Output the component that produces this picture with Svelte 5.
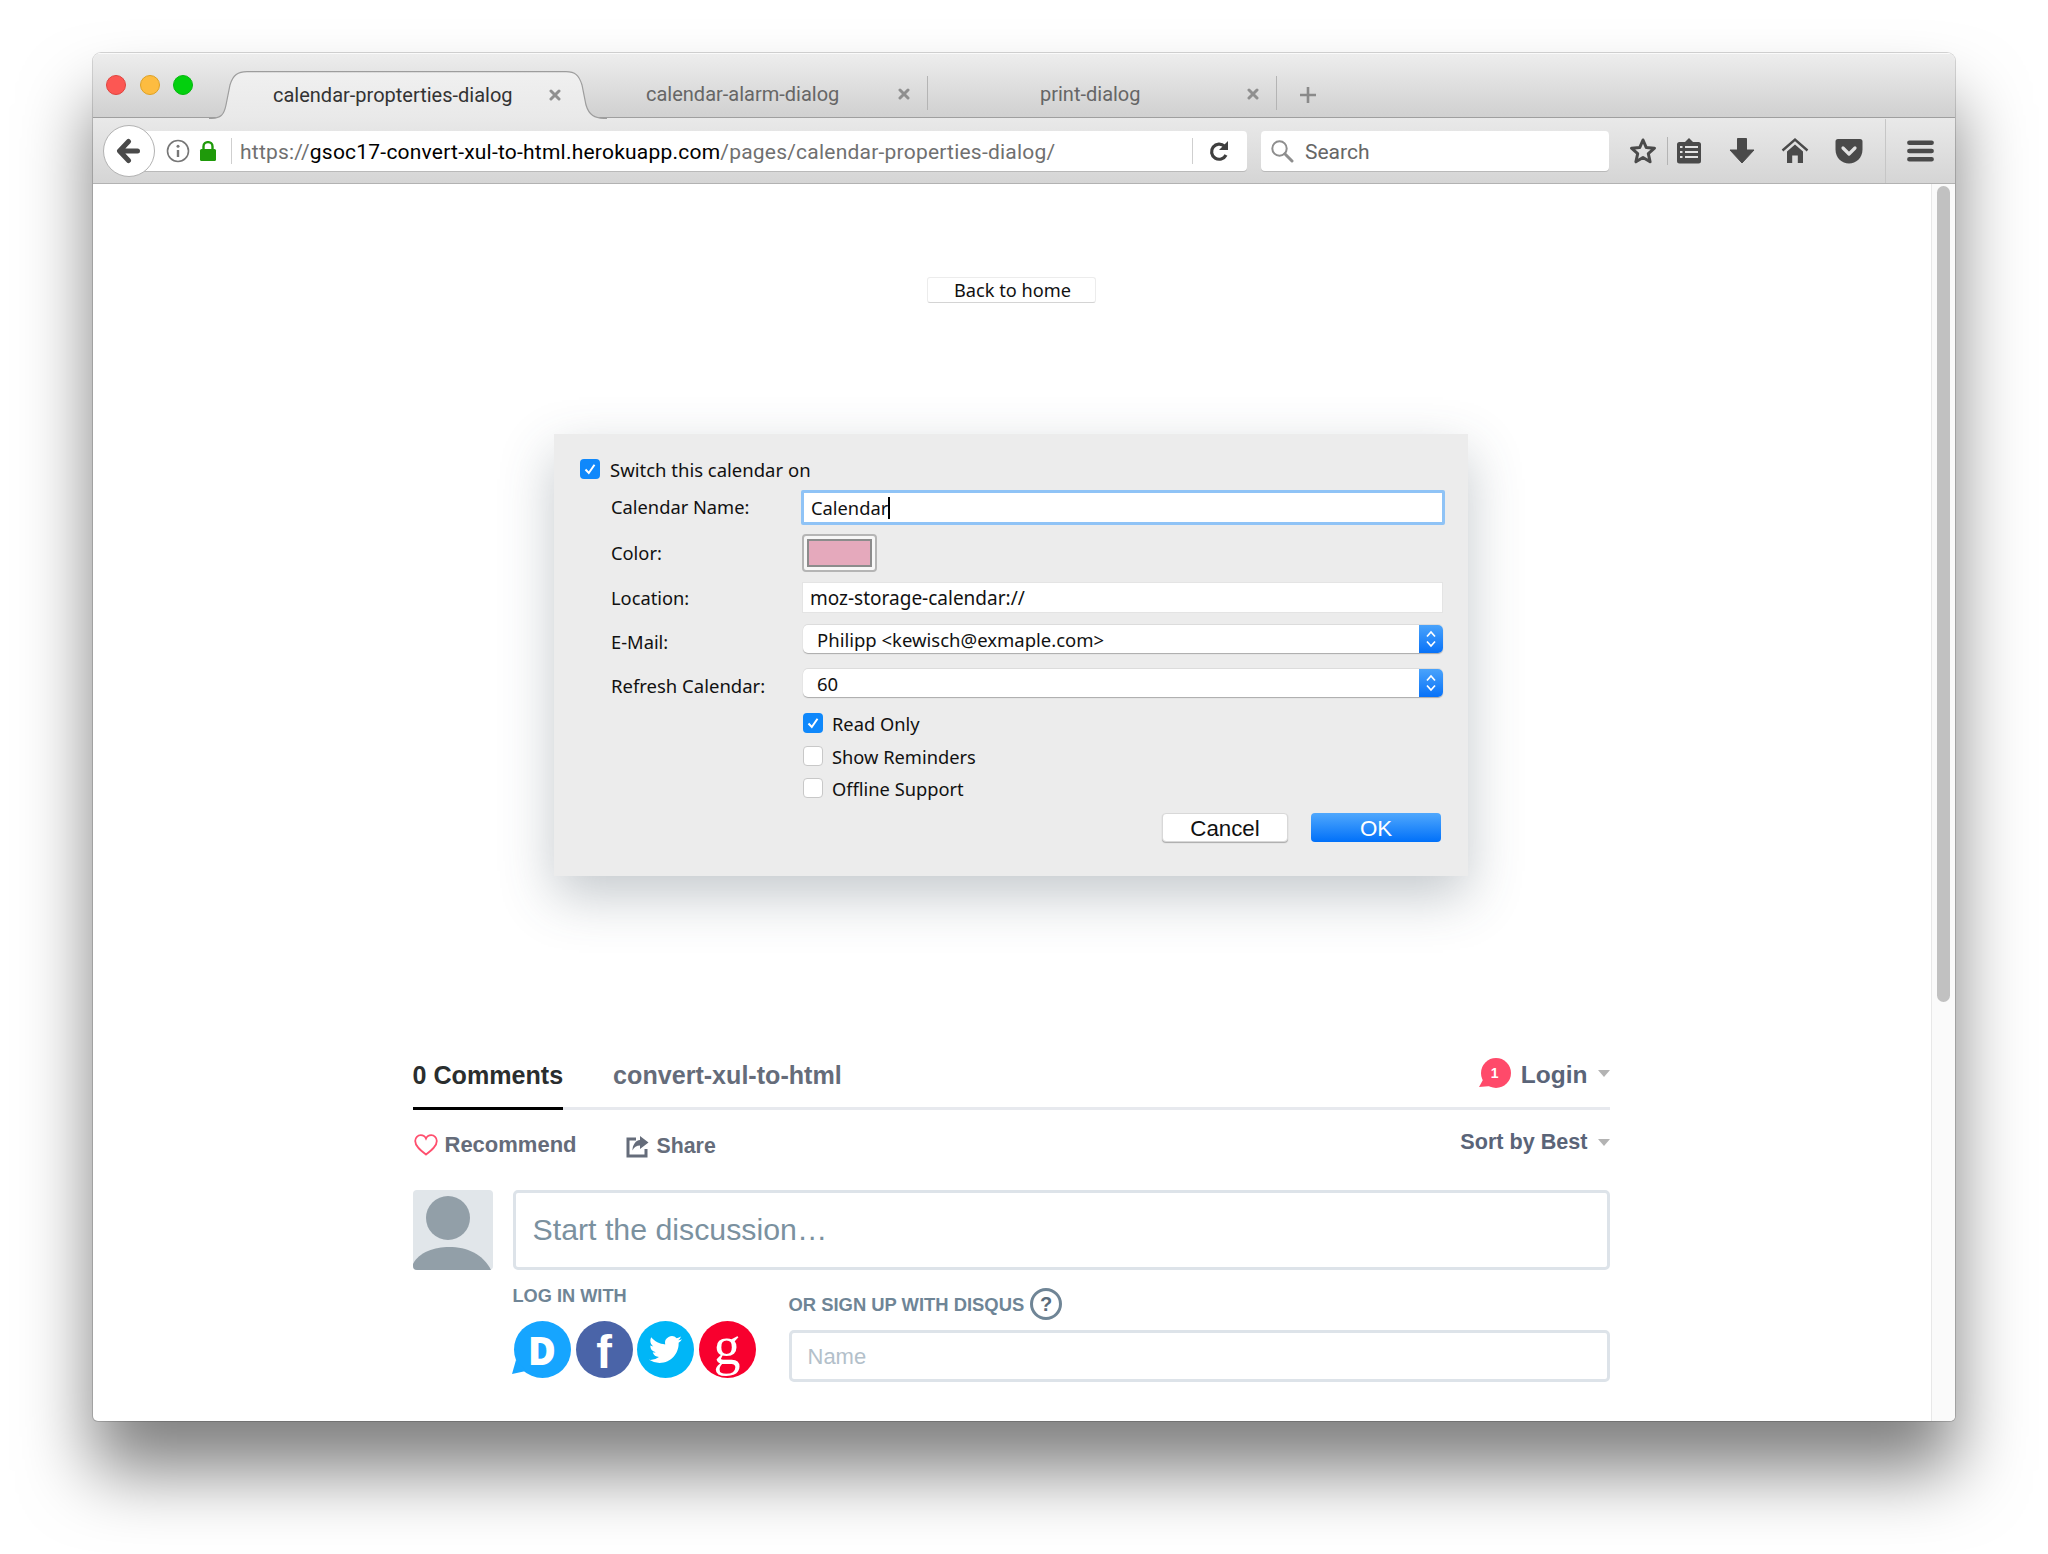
<script>
  const tabs = [
    { label: 'calendar-propterties-dialog', cls: 'active' },
    { label: 'calendar-alarm-dialog', cls: 'second' },
    { label: 'print-dialog', cls: 'third' }
  ];
  const options = [
    { label: 'Read Only', checked: true, cls: 'opt-first' },
    { label: 'Show Reminders', checked: false, cls: 'opt-second' },
    { label: 'Offline Support', checked: false, cls: 'opt-third' }
  ];
</script>

<div class="stage">
  <div class="window">
    <header class="tabstrip">
      <div class="lights">
        <span class="light red"></span>
        <span class="light yellow"></span>
        <span class="light green"></span>
      </div>
      {#each tabs as tab}
        <div class="tab {tab.cls}">
          {#if tab.cls === 'active'}
            <svg class="tabshape" viewBox="0 0 400 48" width="400" height="48" aria-hidden="true">
              <defs>
                <linearGradient id="tabfill" x1="0" y1="0" x2="0" y2="1">
                  <stop offset="0" stop-color="#f0f0f0" />
                  <stop offset="1" stop-color="#e9e9e9" />
                </linearGradient>
              </defs>
              <path d="M0 47.5 C12 47.5 15 44 17 34 L21 14 C24 4 29 .7 38 .7 L357 .7 C366 .7 370 4 373 14 L377 34 C380 44 385 47.5 398 47.5 Z" fill="url(#tabfill)" />
              <path d="M0 47.5 C12 47.5 15 44 17 34 L21 14 C24 4 29 .7 38 .7 L357 .7 C366 .7 370 4 373 14 L377 34 C380 44 385 47.5 398 47.5" fill="none" stroke="#9d9d9d" stroke-width="1.2" />
            </svg>
          {/if}
          <span class="tablabel">{tab.label}</span>
          <svg class="close" viewBox="0 0 12 12" width="12" height="12" aria-hidden="true">
            <path d="M2 2 L10 10 M10 2 L2 10" stroke="#8f8f8f" stroke-width="3" stroke-linecap="round" />
          </svg>
        </div>
      {/each}
      <svg class="newtab" viewBox="0 0 18 18" width="18" height="18" aria-hidden="true">
        <path d="M9 1 V17 M1 9 H17" stroke="#8a8a8a" stroke-width="2.6" />
      </svg>
    </header>

    <div class="toolbar">
      <div class="urlbar">
        <div class="back">
          <svg viewBox="0 0 24 26" width="24" height="26" aria-hidden="true">
            <path d="M21.5 13 H6 M12.5 3.5 L3.5 13 L12.5 22.5" fill="none" stroke="#4a4a4a" stroke-width="5" stroke-linecap="round" stroke-linejoin="round" />
          </svg>
        </div>
        <svg class="info" viewBox="0 0 24 24" width="24" height="24" aria-hidden="true">
          <circle cx="12" cy="12" r="10.5" fill="none" stroke="#777" stroke-width="1.6" />
          <circle cx="12" cy="7.2" r="1.5" fill="#777" />
          <path d="M12 11 V18" stroke="#777" stroke-width="2.4" />
        </svg>
        <svg class="lock" viewBox="0 0 18 20" width="18" height="20" aria-hidden="true">
          <path d="M4.5 9 V5.5 C4.5 -0.3 13.5 -0.3 13.5 5.5 V9" fill="none" stroke="#1f9a0a" stroke-width="2.4" />
          <rect x="1" y="8" width="16" height="12" rx="1.5" fill="#1f9a0a" />
        </svg>
        <span class="vsep urlsep"></span>
        <div class="url"><span class="dim">https://</span>gsoc17-convert-xul-to-html.herokuapp.com<span class="dim">/pages/calendar-properties-dialog/</span></div>
        <span class="vsep reloadsep"></span>
        <svg class="reload" viewBox="0 0 20 22" width="20" height="22" aria-hidden="true">
          <path d="M15.5 6.2 A7.6 7.6 0 1 0 17 15" fill="none" stroke="#3f3f3f" stroke-width="3.2" />
          <path d="M19 1 V10 H10 Z" fill="#3f3f3f" />
        </svg>
      </div>
      <div class="search">
        <svg viewBox="0 0 24 24" width="24" height="24" aria-hidden="true">
          <circle cx="9.5" cy="9.5" r="7.2" fill="none" stroke="#8e8e8e" stroke-width="2" />
          <path d="M14.8 14.8 L22 22" stroke="#8e8e8e" stroke-width="3" stroke-linecap="round" />
        </svg>
        <span class="searchtext">Search</span>
      </div>
      <svg class="ti star" viewBox="0 0 28 28" width="28" height="28" aria-hidden="true">
        <path d="M14 3 L17.2 10.4 L25.5 11.2 L19.3 16.6 L21.1 24.8 L14 20.5 L6.9 24.8 L8.7 16.6 L2.5 11.2 L10.8 10.4 Z" fill="none" stroke="#4a4a4a" stroke-width="3" stroke-linejoin="round" />
      </svg>
      <span class="vsep starsep"></span>
      <svg class="ti list" viewBox="0 0 26 28" width="26" height="28" aria-hidden="true">
        <path d="M3.5 5 H9 L13 1 L17 5 H22.5 A2.5 2.5 0 0 1 25 7.5 V24 A2.5 2.5 0 0 1 22.5 26.5 H3.5 A2.5 2.5 0 0 1 1 24 V7.5 A2.5 2.5 0 0 1 3.5 5 Z" fill="#4a4a4a" />
        <path d="M4 10 H6.5 M9 10 H22 M4 15 H6.5 M9 15 H22 M4 20 H6.5 M9 20 H22" stroke="#e2e2e2" stroke-width="2" />
      </svg>
      <svg class="ti down" viewBox="0 0 26 28" width="26" height="28" aria-hidden="true">
        <path d="M8.5 1.5 H17.5 V13 H25 L13 26 L1 13 H8.5 Z" fill="#4a4a4a" stroke="#4a4a4a" stroke-linejoin="round" />
      </svg>
      <svg class="ti home" viewBox="0 0 28 28" width="28" height="28" aria-hidden="true">
        <path d="M1.5 13.5 L14 2.5 L26.5 13.5" fill="none" stroke="#4a4a4a" stroke-width="2.4" />
        <path d="M6 14.5 L14 7.5 L22 14.5 V26 H16.8 V18.5 H11.2 V26 H6 Z" fill="#4a4a4a" />
      </svg>
      <svg class="ti pocket" viewBox="0 0 28 26" width="28" height="26" aria-hidden="true">
        <path d="M3 1 H25 A2.5 2.5 0 0 1 27.5 3.5 V11.5 C27.5 20 21 25.5 14 25.5 C7 25.5 .5 20 .5 11.5 V3.5 A2.5 2.5 0 0 1 3 1 Z" fill="#4a4a4a" />
        <path d="M8 10 L14 16 L20 10" fill="none" stroke="#e2e2e2" stroke-width="3.2" stroke-linecap="round" stroke-linejoin="round" />
      </svg>
      <span class="toolsep"></span>
      <svg class="ti menu" viewBox="0 0 28 24" width="27" height="24" aria-hidden="true">
        <path d="M2.5 3.5 H25.5 M2.5 12 H25.5 M2.5 20.5 H25.5" stroke="#4a4a4a" stroke-width="4.8" stroke-linecap="round" />
      </svg>
    </div>

    <div class="viewport">
      <main class="page">
        <button class="home-btn">Back to home</button>

        <section class="dialog">
          <div class="check master">
            <span class="box on">
              <svg viewBox="0 0 20 20" width="20" height="20" aria-hidden="true"><path d="M5.5 10.5 L8.8 14 L14.5 5.8" fill="none" stroke="#fff" stroke-width="2" /></svg>
            </span>
            <span class="mastertext">Switch this calendar on</span>
          </div>

          <div class="row r-name">
            <span class="lbl">Calendar Name:</span>
            <div class="field focus">Calendar<span class="caret"></span></div>
          </div>
          <div class="row r-color">
            <span class="lbl">Color:</span>
            <div class="swatch"><span></span></div>
          </div>
          <div class="row r-loc">
            <span class="lbl">Location:</span>
            <div class="field plain">moz-storage-calendar://</div>
          </div>
          <div class="row r-mail">
            <span class="lbl">E-Mail:</span>
            <div class="select">
              <span class="val">Philipp &lt;kewisch@exmaple.com&gt;</span>
              <span class="arrows">
                <svg viewBox="0 0 12 18" width="12" height="18" aria-hidden="true"><path d="M2 6.5 L6 2 L10 6.5 M2 11.5 L6 16 L10 11.5" fill="none" stroke="#fff" stroke-width="1.7" /></svg>
              </span>
            </div>
          </div>
          <div class="row r-refresh">
            <span class="lbl">Refresh Calendar:</span>
            <div class="select">
              <span class="val">60</span>
              <span class="arrows">
                <svg viewBox="0 0 12 18" width="12" height="18" aria-hidden="true"><path d="M2 6.5 L6 2 L10 6.5 M2 11.5 L6 16 L10 11.5" fill="none" stroke="#fff" stroke-width="1.7" /></svg>
              </span>
            </div>
          </div>

          {#each options as opt}
            <div class="check option {opt.cls}">
              <span class="box" class:on={opt.checked}>
                {#if opt.checked}
                  <svg viewBox="0 0 20 20" width="20" height="20" aria-hidden="true"><path d="M5.5 10.5 L8.8 14 L14.5 5.8" fill="none" stroke="#fff" stroke-width="2" /></svg>
                {/if}
              </span>
              <span>{opt.label}</span>
            </div>
          {/each}

          <div class="actions">
            <button class="cancel">Cancel</button>
            <button class="ok">OK</button>
          </div>
        </section>

        <section class="disqus">
          <nav class="dnav">
            <span class="dtab current">0 Comments</span>
            <span class="dtab">convert-xul-to-html</span>
            <div class="login">
              <svg viewBox="0 0 32 33" width="32" height="33" aria-hidden="true">
                <circle cx="17" cy="16" r="15" fill="#ff4a6a" />
                <path d="M5 21 L0 30 L12 29 Z" fill="#ff4a6a" />
              </svg>
              <span class="bubblenum">1</span>
              <span class="logintext">Login</span>
              <span class="tri"></span>
            </div>
          </nav>

          <div class="actionsbar">
            <svg class="heart" viewBox="0 0 24 22" width="24" height="22" aria-hidden="true">
              <path d="M12 20.5 C6 16 1.2 12 1.2 7 C1.2 3.6 3.8 1.2 6.8 1.2 C9 1.2 11 2.4 12 4.6 C13 2.4 15 1.2 17.2 1.2 C20.2 1.2 22.8 3.6 22.8 7 C22.8 12 18 16 12 20.5 Z" fill="none" stroke="#ff4f6e" stroke-width="1.8" />
            </svg>
            <span class="recommend">Recommend</span>
            <svg class="share" viewBox="0 0 23 23" width="23" height="23" aria-hidden="true">
              <path d="M10 4 H2 V21 H20 V14" fill="none" stroke="#656c7a" stroke-width="3" />
              <path d="M14 1 L22.5 7.5 L14 14 V10.5 C10.5 10.5 8 12 6.5 15.5 C6.5 10 9.5 5.5 14 5 Z" fill="#656c7a" />
            </svg>
            <span class="sharetext">Share</span>
            <div class="sort">
              <span>Sort by Best</span>
              <span class="tri"></span>
            </div>
          </div>

          <div class="composer">
            <svg class="avatar" viewBox="0 0 80 80" width="80" height="80" aria-hidden="true">
              <rect width="80" height="80" rx="4" fill="#e1e6ea" />
              <circle cx="35" cy="28" r="22" fill="#929fa8" />
              <path d="M0 74 C6 62 22 57 36 57 C54 57 70 64 78 80 H4 A4 4 0 0 1 0 76 Z" fill="#929fa8" />
            </svg>
            <div class="discussion">Start the discussion…</div>
          </div>

          <div class="auth">
            <div class="login-with">
              <div class="caption">LOG IN WITH</div>
              <div class="socials">
                <span class="soc d">
                  <svg class="tail" viewBox="0 0 14 14" width="14" height="14" aria-hidden="true"><path d="M4 0 L0 14 L14 11 Z" fill="#16a5ff" /></svg>
                  <b>D</b>
                </span>
                <span class="soc f"><b>f</b></span>
                <span class="soc t">
                  <svg viewBox="0 0 24 24" width="33" height="33" aria-hidden="true"><path fill="#fff" d="M23.953 4.57a10 10 0 01-2.825.775 4.958 4.958 0 002.163-2.723c-.951.555-2.005.959-3.127 1.184a4.92 4.92 0 00-8.384 4.482C7.69 8.095 4.067 6.13 1.64 3.162a4.822 4.822 0 00-.666 2.475c0 1.71.87 3.213 2.188 4.096a4.904 4.904 0 01-2.228-.616v.06a4.923 4.923 0 003.946 4.827 4.996 4.996 0 01-2.212.085 4.936 4.936 0 004.604 3.417 9.867 9.867 0 01-6.102 2.105c-.39 0-.779-.023-1.17-.067a13.995 13.995 0 007.557 2.209c9.053 0 13.998-7.496 13.998-13.985 0-.21 0-.42-.015-.63A9.935 9.935 0 0024 4.59z" /></svg>
                </span>
                <span class="soc g"><b>g</b></span>
              </div>
            </div>
            <div class="signup">
              <div class="caption withhelp">
                OR SIGN UP WITH DISQUS
                <span class="help">?</span>
              </div>
              <div class="nameinput">Name</div>
            </div>
          </div>
        </section>
      </main>
      <aside class="scrollbar"><span class="thumb"></span></aside>
    </div>
  </div>
</div>

<style>
  :global(body) { margin: 0; background: #fff; }

  .stage {
    width: 2048px;
    height: 1554px;
    box-sizing: border-box;
    padding: 53px 93px 0;
    overflow: hidden;
    background: #fff;
  }

  .window {
    height: 1368px;
    display: flex;
    flex-direction: column;
    background: #fff;
    border-radius: 8px 8px 5px 5px;
    box-shadow: 0 0 0 1px rgba(0, 0, 0, .16), 0 50px 70px rgba(0, 0, 0, .5);
    overflow: hidden;
  }

  /* tab strip */
  .tabstrip {
    height: 65px;
    box-sizing: border-box;
    flex: none;
    display: flex;
    align-items: flex-end;
    background: linear-gradient(#ededed, #d0d0d0);
    border-top: 1px solid #fafafa;
    border-bottom: 1px solid #9f9f9f;
    font: 20px Roboto, sans-serif;
    position: relative;
    z-index: 1;
  }
  .lights {
    display: flex;
    gap: 13.5px;
    margin: 0 16px 22px 13px;
    align-self: flex-end;
  }
  .light {
    width: 20px;
    height: 20px;
    border-radius: 50%;
    box-sizing: border-box;
  }
  .red { background: #fc5753; border: 1px solid #e0443e; }
  .yellow { background: #fdbc40; border: 1px solid #dea123; }
  .green { background: #03d00e; border: 1px solid #04b80f; }

  .tab {
    height: 47px;
    box-sizing: border-box;
    display: flex;
    align-items: center;
    justify-content: space-between;
    position: relative;
    color: #666;
  }
  .tablabel, .close { position: relative; }
  .tabshape { position: absolute; left: 0; top: 0; }
  .tab.active {
    width: 395px;
    padding: 0 43px 0 64px;
    color: #333;
    margin-bottom: -1px;
  }
  .tab.second {
    width: 323px;
    padding: 0 17px 0 42px;
  }
  .tab.third {
    width: 349px;
    padding: 0 17px 0 113px;
  }
  .tab.second::after, .tab.third::after {
    content: "";
    position: absolute;
    right: 0;
    top: 6px;
    height: 34px;
    width: 1px;
    background: #b4b4b4;
  }
  .tab.third::after { right: -1px; }
  .tab.second::after { right: -1px; }
  .newtab { margin: 0 0 13px 23px; }

  /* toolbar */
  .toolbar {
    height: 66px;
    box-sizing: border-box;
    flex: none;
    display: flex;
    align-items: center;
    padding-left: 31px;
    background: linear-gradient(#e9e9e9, #d5d5d5);
    border-bottom: 1px solid #b2b2b2;
    font: 21px Roboto, sans-serif;
  }
  .urlbar {
    width: 1123px;
    height: 40px;
    flex: none;
    display: flex;
    align-items: center;
    background: #fff;
    border-radius: 4px;
    box-shadow: 0 1px 0 #b9b9b9;
  }
  .back {
    width: 52px;
    height: 52px;
    flex: none;
    box-sizing: border-box;
    margin-left: -21px;
    display: flex;
    align-items: center;
    justify-content: center;
    border-radius: 50%;
    background: #fff;
    border: 1px solid #b2b2b2;
    position: relative;
    left: 0;
    padding-right: 3px;
  }
  .info { margin-left: 11px; flex: none; }
  .lock { margin-left: 9px; flex: none; }
  .vsep { width: 1px; height: 26px; background: #cfcfcf; flex: none; }
  .urlsep { margin-left: 14px; }
  .url {
    margin-left: 8px;
    padding-top: 2px;
    color: #000;
    white-space: nowrap;
    width: 952px;
    flex: none;
    letter-spacing: .22px;
  }
  .dim { color: #707070; }
  .reload { margin-left: 16px; flex: none; }

  .search {
    width: 348px;
    height: 40px;
    margin-left: 14px;
    flex: none;
    display: flex;
    align-items: center;
    box-sizing: border-box;
    padding-left: 9px;
    gap: 11px;
    background: #fff;
    border-radius: 4px;
    box-shadow: 0 1px 0 #b9b9b9;
    color: #666;
  }
  .searchtext { padding-top: 2px; }
  .ti { flex: none; }
  .star { margin-left: 20px; }
  .starsep { margin-left: 10px; height: 28px; background: #b4b4b4; }
  .list { margin-left: 8px; }
  .down { margin-left: 27px; }
  .home { margin-left: 26px; }
  .pocket { margin-left: 26px; }
  .toolsep { width: 1px; height: 64px; background: #c6c6c6; margin-left: 22px; flex: none; }
  .menu { margin-left: 21px; }

  /* page */
  .viewport {
    flex: 1;
    min-height: 0;
    display: flex;
    overflow: hidden;
  }
  .page {
    flex: 1;
    min-width: 0;
    display: flex;
    flex-direction: column;
    align-items: center;
    padding-right: 2px;
  }
  .scrollbar {
    width: 24px;
    flex: none;
    box-sizing: border-box;
    background: #fafafa;
    border-left: 1px solid #e8e8e8;
    padding: 2px 0 0 5px;
  }
  .thumb {
    display: block;
    width: 13px;
    height: 816px;
    border-radius: 7px;
    background: #c1c1c1;
  }

  .home-btn {
    margin-top: 93px;
    width: 169px;
    height: 26px;
    padding: 0 0 3px 3px;
    background: #fff;
    border: 1px solid #ececec;
    border-bottom-color: #d4d4d4;
    border-radius: 3px;
    color: #111;
    font: 18.2px "Noto Sans", sans-serif;
  }

  /* dialog */
  .dialog {
    width: 914px;
    height: 442px;
    margin-top: 131px;
    box-sizing: border-box;
    padding: 25px 23px 0 26px;
    background: #ececec;
    box-shadow: 0 20px 50px rgba(60, 75, 90, .3);
    color: #111;
    font: 18.3px "Noto Sans", sans-serif;
    display: flex;
    flex-direction: column;
  }
  .check {
    display: flex;
    align-items: center;
    height: 20px;
    gap: 9px;
    white-space: nowrap;
  }
  .mastertext { padding-top: 1px; font-size: 18.5px; margin-left: 1px; }
  .box {
    width: 20px;
    height: 20px;
    box-sizing: border-box;
    flex: none;
    border-radius: 4px;
    background: #fff;
    border: 1.5px solid #c8c8c8;
  }
  .box.on {
    background: #0f88fb;
    border: none;
  }
  .box svg { display: block; }
  .option { margin-left: 223px; }
  .opt-first { margin-top: 16px; }
  .opt-second { margin-top: 13px; }
  .opt-third { margin-top: 12px; }

  .row { display: flex; align-items: center; padding-left: 31px; }
  .lbl { width: 190px; flex: none; white-space: nowrap; }
  .r-name { margin-top: 11px; height: 35px; }
  .r-color { margin-top: 9px; height: 38px; }
  .r-loc { margin-top: 10px; height: 31px; }
  .r-mail { margin-top: 12px; height: 28px; }
  .r-refresh { margin-top: 16px; height: 28px; }
  .r-name .lbl, .r-color .lbl { padding-bottom: 2px; }
  .r-mail .lbl, .r-refresh .lbl { padding-top: 4px; }
  .r-refresh .lbl { font-size: 18.5px; }

  .field {
    flex: 1;
    box-sizing: border-box;
    display: flex;
    align-items: center;
    background: #fff;
    white-space: nowrap;
  }
  .field.focus {
    height: 35px;
    padding-left: 7px;
    border: 3px solid #8fc3f6;
    border-radius: 2px;
  }
  .caret {
    display: inline-block;
    width: 1.5px;
    height: 22px;
    background: #000;
  }
  .field.plain {
    height: 31px;
    padding-left: 7px;
    margin: 0 2px 0 1px;
    border: 1px solid #e4e4e4;
    font-size: 19px;
  }
  .swatch {
    width: 75px;
    height: 38px;
    margin-left: 1px;
    box-sizing: border-box;
    padding: 3px;
    background: #f7f7f7;
    border: 2px solid #b5b5b5;
    border-radius: 4px;
    display: flex;
  }
  .swatch span {
    flex: 1;
    background: #e5a9bc;
    border: 2px solid #8c8c8c;
  }
  .select {
    flex: 1;
    height: 28px;
    margin: 0 2px;
    display: flex;
    align-items: center;
    justify-content: space-between;
    background: #fff;
    border-radius: 5px;
    box-shadow: 0 1px 1px #aaa, 0 -1px 0 #dcdcdc;
  }
  .val { padding: 1px 0 0 14px; white-space: nowrap; font-size: 18.5px; }
  .arrows {
    width: 24px;
    height: 28px;
    display: flex;
    align-items: center;
    justify-content: center;
    background: linear-gradient(#4aa3fb, #0872f8);
    border-radius: 0 5px 5px 0;
  }
  .actions {
    display: flex;
    justify-content: flex-end;
    gap: 23px;
    margin: 15px 4px 0 0;
    font: 22.3px "Liberation Sans", sans-serif;
  }
  .actions button {
    height: 29px;
    padding: 2px 0 0;
    font: inherit;
    border-radius: 4px;
  }
  .cancel {
    width: 126px;
    background: #fff;
    color: #111;
    border: 1px solid #d8d8d8;
    box-shadow: 0 1px 1px #aaa;
  }
  .ok {
    width: 130px;
    background: linear-gradient(#50a8fd, #0070f9);
    color: #fff;
    border: none;
  }

  /* discussion block */
  .disqus {
    width: 1197px;
    margin-top: 164px;
    font-family: "Liberation Sans", sans-serif;
    color: #656c7a;
  }
  .dnav {
    height: 70px;
    box-sizing: border-box;
    display: flex;
    align-items: stretch;
    gap: 50px;
    border-bottom: 3px solid #e7e9ee;
    font-size: 25.1px;
    font-weight: 700;
  }
  .dtab {
    display: flex;
    align-items: center;
    padding-top: 0;
    height: 70px;
    box-sizing: border-box;
  }
  .dtab.current { color: #2a2e2e; border-bottom: 3px solid #000; padding-top: 3px; }
  .login {
    margin-left: auto;
    display: flex;
    align-items: center;
    height: 67px;
    position: relative;
  }
  .bubblenum {
    position: absolute;
    left: 12px;
    top: 26px;
    width: 10px;
    color: #fff;
    font: 700 14px/1 "Liberation Sans", sans-serif;
  }
  .logintext { margin-left: 10px; font-size: 24.5px; font-weight: 700; color: #5a6478; padding-top: 2px; }
  .tri {
    display: inline-block;
    width: 0;
    height: 0;
    border-left: 6.5px solid transparent;
    border-right: 6.5px solid transparent;
    border-top: 7px solid #b3b3b3;
    margin-left: 10px;
  }
  .actionsbar {
    height: 80px;
    box-sizing: border-box;
    padding: 0 0 8px 1px;
    display: flex;
    align-items: center;
    font-size: 22px;
    font-weight: 700;
  }
  .heart { margin-top: -2px; }
  .recommend { margin-left: 7px; margin-top: -2px; }
  .share { margin-left: 49px; }
  .sharetext { margin-left: 8px; font-size: 21.3px; }
  .sort { margin-left: auto; display: flex; align-items: center; margin-top: -8px; color: #5a6478; font-size: 21.6px; }
  .composer {
    display: flex;
    gap: 20px;
  }
  .avatar { flex: none; display: block; }
  .discussion {
    flex: 1;
    height: 80px;
    box-sizing: border-box;
    display: flex;
    align-items: center;
    padding-left: 17px;
    border: 3px solid #dde3e9;
    border-radius: 5px;
    color: #7b919f;
    font-size: 30.3px;
  }
  .auth {
    display: flex;
    padding-left: 100px;
  }
  .login-with { width: 276px; padding-top: 16px; }
  .caption {
    color: #6f8596;
    font-size: 18.2px;
    font-weight: 700;
    line-height: 21px;
  }
  .socials {
    display: flex;
    gap: 5px;
    margin-top: 14px;
    padding-left: 1px;
  }
  .soc {
    width: 57px;
    height: 57px;
    border-radius: 50%;
    display: flex;
    align-items: center;
    justify-content: center;
    color: #fff;
    position: relative;
  }
  .soc.d { background: #16a5ff; font: 800 38px "Open Sans", sans-serif; }
  .soc.f { background: #4a64a8; font: 700 47px "Liberation Sans", sans-serif; margin-right: -1px; }
  .soc.t { background: #00b6f7; }
  .soc.g { background: #f8002e; font: 400 54px "Liberation Serif", serif; }
  .soc b { position: relative; }
  .soc.g b { top: -4px; font-weight: 400; }
  .soc.f b { top: 2px; }
  .tail { position: absolute; left: -2px; bottom: 4px; }
  .signup { flex: 1; padding-top: 18px; }
  .withhelp {
    display: flex;
    align-items: center;
    gap: 6px;
    height: 32px;
    font-size: 18.4px;
  }
  .help {
    width: 32px;
    height: 32px;
    box-sizing: border-box;
    border: 3px solid #6f8596;
    border-radius: 50%;
    display: flex;
    align-items: center;
    justify-content: center;
    font-size: 20px;
    color: #5a6c7b;
  }
  .nameinput {
    height: 52px;
    margin-top: 10px;
    box-sizing: border-box;
    display: flex;
    align-items: center;
    padding: 2px 0 0 16px;
    border: 3px solid #dde3e9;
    border-radius: 5px;
    color: #b3c0ca;
    font-size: 22px;
    font-weight: 400;
  }
</style>
